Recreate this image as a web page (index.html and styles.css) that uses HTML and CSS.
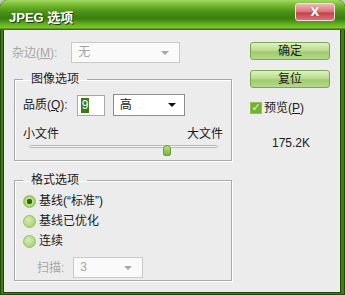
FILE: index.html
```html
<!DOCTYPE html>
<html lang="zh-CN">
<head>
<meta charset="UTF-8">
<link rel="stylesheet" href="styles.css">
<title>JPEG 选项</title>
</head>
<body>
  <div class="window">
    <div class="titlebar">
      <span class="title">JPEG 选项</span>
      <button class="closeBtn">X</button>
    </div>
    <div class="content">
      <div class="leftCol">
        <div class="row matteRow">
          <span class="label disabled">杂边(<u>M</u>):</span>
          <div class="select disabled matteSelect">无<span class="arrow"></span></div>
        </div>

        <fieldset class="group imageGroup">
          <legend>图像选项</legend>
          <div class="row qualityRow">
            <span class="label">品质(<u>Q</u>):</span>
            <div class="textBox"><span class="sel">9</span></div>
            <div class="select qualitySelect">高<span class="arrow"></span></div>
          </div>
          <div class="rangeLabels">
            <span>小文件</span>
            <span>大文件</span>
          </div>
          <div class="slider">
            <div class="track"></div>
            <div class="thumb" style="left: 71%"></div>
          </div>
        </fieldset>

        <fieldset class="group formatGroup">
          <legend>格式选项</legend>
          <div class="radio checked"><span class="dot"></span>基线(“标准”)</div>
          <div class="radio"><span class="dot"></span>基线已优化</div>
          <div class="radio"><span class="dot"></span>连续</div>
          <div class="row scanRow">
            <span class="label disabled">扫描:</span>
            <div class="select disabled scanSelect">3<span class="arrow"></span></div>
          </div>
        </fieldset>
      </div>

      <div class="rightCol">
        <button class="btn">确定</button>
        <button class="btn">复位</button>
        <div class="check"><span class="box">✓</span>预览(<u>P</u>)</div>
        <div class="size">175.2K</div>
      </div>
    </div>
  </div>
</body>
</html>
```

FILE: styles.css
```css
* {
  margin: 0;
  padding: 0;
  box-sizing: border-box;
}

body {
  width: 345px;
  height: 295px;
  background: #c9c9c9;
  font-family: "Liberation Sans", "Noto Sans CJK SC", sans-serif;
  font-size: 12px;
  color: #1a1a1a;
  overflow: hidden;
}

.window {
  width: 345px;
  height: 295px;
  display: flex;
  flex-direction: column;
  background: #3f7d16;
  border-radius: 7px 7px 0 0;
  padding: 0 4px 2px 3px;
  box-shadow: inset 1px 0 #24480b, inset -1px 0 #24480b, inset 0 -1px #24480b;
}

.titlebar {
  height: 30px;
  margin: 0 -4px 0 -3px;
  border-radius: 7px 7px 0 0;
  background: linear-gradient(#a3d866 0%, #7cc034 14%, #4a9118 40%, #3a7f0e 62%, #66b322 82%, #7cc42c 92%, #2a560c 100%);
  display: flex;
  align-items: flex-start;
  justify-content: space-between;
  padding: 0 10px 0 9px;
}

.title {
  color: #fff;
  font-weight: bold;
  font-size: 13px;
  line-height: 16px;
  margin-top: 10px;
  text-shadow: 1px 1px 0 #1c3d06;
}

.closeBtn {
  width: 40px;
  height: 18px;
  margin-top: 3px;
  border: 1px solid #f4dfe0;
  border-radius: 3px;
  background: linear-gradient(#f2b8bc, #d87078 50%, #c4404b 55%, #d9707a);
  color: #fff;
  font-family: "DejaVu Sans", sans-serif;
  font-weight: bold;
  font-size: 12px;
  line-height: 14px;
  text-shadow: 0 0 1px #8a2a30;
}

.content {
  flex: 1;
  background: #ececec;
  border: 1px solid #22440a;
  border-top: none;
  display: grid;
  grid-template-columns: 218px 80px;
  column-gap: 18px;
  padding: 12px 0 0 10px;
}

.row {
  display: flex;
  align-items: center;
}

.label {
  line-height: 14px;
}

.disabled {
  color: #a6a6a6;
}

.select {
  position: relative;
  background: #fff;
  border: 1px solid #8c8c8c;
  line-height: 19px;
  padding-left: 6px;
}

.select.disabled {
  border-color: #c9c9c9;
  background: #fafafa;
}

.arrow {
  position: absolute;
  right: 8px;
  top: 8px;
  border-left: 4px solid transparent;
  border-right: 4px solid transparent;
  border-top: 4px solid #111;
}

.select.disabled .arrow {
  border-top-color: #a6a6a6;
  right: 10px;
}

.matteRow {
  height: 21px;
  margin-left: -2px;
}

.matteSelect {
  width: 109px;
  height: 21px;
  margin-left: 14px;
}

.group {
  border: 1px solid #a9a9a9;
  box-shadow: 1px 1px 0 #fff, inset 1px 1px 0 #fff;
  padding: 0 8px;
}

.group legend {
  padding: 0 8px;
  line-height: 14px;
}

.imageGroup {
  margin-top: 9px;
  height: 89px;
  padding-top: 8px;
}

.qualityRow {
  height: 22px;
}

.textBox {
  width: 28px;
  height: 21px;
  margin-left: 9px;
  background: #fff;
  border: 1px solid #a9a9a9;
  padding: 2px 0 0 3px;
}

.textBox .sel {
  display: inline-block;
  background: #3b7a18;
  color: #fff;
  line-height: 15px;
  padding: 0 1px;
}

.qualitySelect {
  width: 72px;
  height: 22px;
  margin-left: 8px;
  line-height: 20px;
}

.rangeLabels {
  display: flex;
  justify-content: space-between;
  margin-top: 11px;
  line-height: 14px;
}

.slider {
  position: relative;
  height: 14px;
  margin: 0 5px 0 6px;
}

.track {
  margin-top: 4px;
  height: 3px;
  border: 1px solid #b8b8b8;
  border-radius: 2px;
  background: #f6f6f6;
}

.thumb {
  position: absolute;
  top: 0;
  width: 8px;
  height: 11px;
  border-radius: 4px 4px 2px 2px;
  background: linear-gradient(#b9e07f, #78b63a);
  border: 1px solid #6b9e3c;
}

.formatGroup {
  margin-top: 12px;
  height: 108px;
  padding-top: 4px;
}

.radio {
  display: flex;
  align-items: center;
  height: 20px;
  line-height: 14px;
}

.radio .dot {
  width: 13px;
  height: 13px;
  border-radius: 50%;
  margin-right: 3px;
  border: 1px solid #93c063;
  background: radial-gradient(circle at 40% 35%, #d6ecb4, #9ccb62);
}

.radio.checked .dot {
  background: radial-gradient(circle, #2f6a0e 0 2.5px, #bfe08f 3px 4px, #9ccb62 4.5px);
}

.scanRow {
  height: 21px;
  margin-top: 6px;
  margin-left: 14px;
}

.scanSelect {
  width: 70px;
  height: 21px;
  margin-left: 9px;
}

.rightCol {
  display: flex;
  flex-direction: column;
}

.btn {
  width: 80px;
  height: 18px;
  border: 1px solid #7aa84e;
  border-radius: 3px;
  background: linear-gradient(#e0f1c8, #b5da87 50%, #9fcb6c 55%, #b3d88a);
  font-family: "Liberation Sans", "Noto Sans CJK SC", sans-serif;
  font-size: 12px;
  line-height: 16px;
  color: #1a1a1a;
  margin-bottom: 10px;
}

.check {
  display: flex;
  align-items: center;
  margin-top: 3px;
  line-height: 14px;
}

.check .box {
  width: 12px;
  height: 12px;
  margin-right: 2px;
  background: #6fb331;
  border: 1px solid #8ec060;
  color: #e8f6d0;
  font-family: "DejaVu Sans", sans-serif;
  font-size: 11px;
  line-height: 10px;
  text-align: center;
  font-weight: bold;
}

.size {
  margin-top: 21px;
  margin-left: 22px;
  line-height: 14px;
}
```
